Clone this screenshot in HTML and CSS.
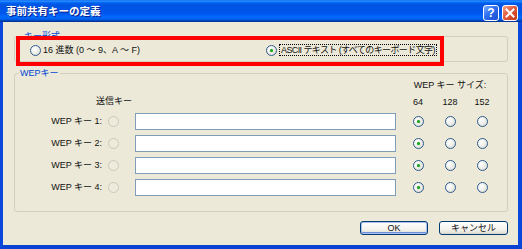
FILE: index.html
```html
<!DOCTYPE html>
<html lang="ja">
<head>
<meta charset="utf-8">
<title>事前共有キーの定義</title>
<link rel="stylesheet" href="styles.css">
</head>
<body>
<div class="window">
  <div class="titlebar">
    <span class="title">事前共有キーの定義</span>
    <div class="tb-buttons">
      <span class="tb-btn help">?</span>
      <span class="tb-btn close">
        <svg width="10" height="10" viewBox="0 0 10 10"><path d="M1.5 1.5 L8.5 8.5 M8.5 1.5 L1.5 8.5" stroke="#fff" stroke-width="2" stroke-linecap="square"/></svg>
      </span>
    </div>
  </div>
  <div class="frame">
    <fieldset class="group g1">
      <legend>キー形式</legend>
      <div class="format-row">
        <label class="opt"><span class="radio"></span><span class="opt-text">16 進数 (0 ～ 9、A ～ F)</span></label>
        <label class="opt"><span class="radio checked"></span><span class="opt-text focus">ASCII テキスト (すべてのキーボード文字)</span></label>
      </div>
    </fieldset>
    <fieldset class="group g2">
      <legend>WEPキー</legend>
      <div class="wep-grid">
        <div class="size-head">WEP キー サイズ:</div>
        <div class="send-head">送信キー</div>
        <div class="bits c64">64</div>
        <div class="bits c128">128</div>
        <div class="bits c152">152</div>

        <div class="key-label r1">WEP キー 1:</div>
        <span class="radio disabled c-send r1"></span>
        <span class="key-input r1"></span>
        <span class="radio checked c64 r1"></span>
        <span class="radio c128 r1"></span>
        <span class="radio c152 r1"></span>

        <div class="key-label r2">WEP キー 2:</div>
        <span class="radio disabled c-send r2"></span>
        <span class="key-input r2"></span>
        <span class="radio checked c64 r2"></span>
        <span class="radio c128 r2"></span>
        <span class="radio c152 r2"></span>

        <div class="key-label r3">WEP キー 3:</div>
        <span class="radio disabled c-send r3"></span>
        <span class="key-input r3"></span>
        <span class="radio checked c64 r3"></span>
        <span class="radio c128 r3"></span>
        <span class="radio c152 r3"></span>

        <div class="key-label r4">WEP キー 4:</div>
        <span class="radio disabled c-send r4"></span>
        <span class="key-input r4"></span>
        <span class="radio checked c64 r4"></span>
        <span class="radio c128 r4"></span>
        <span class="radio c152 r4"></span>
      </div>
    </fieldset>
    <div class="buttons">
      <span class="btn btn-ok">OK</span>
      <span class="btn btn-cancel">キャンセル</span>
    </div>
  </div>
  <div class="highlight"></div>
</div>
</body>
</html>
```

FILE: styles.css
```css
* { box-sizing: border-box; }
html, body { margin: 0; padding: 0; }
body {
  width: 522px;
  height: 249px;
  overflow: hidden;
  background: #ECE9D8;
  font-family: "Liberation Sans", "Noto Sans CJK JP", sans-serif;
  font-size: 9px;
  line-height: 11px;
  color: #111;
}
.window {
  position: relative;
  width: 522px;
  height: 249px;
  display: flex;
  flex-direction: column;
}
.titlebar {
  flex: none;
  height: 22px;
  display: flex;
  align-items: center;
  justify-content: space-between;
  padding: 0 4px 0 6px;
  background: linear-gradient(to bottom, #0058ee 0%, #3593ff 4%, #288eff 6%, #127dff 8%, #036ffc 10%, #0262ee 14%, #0057e5 20%, #0054e3 24%, #0055eb 56%, #005bf5 66%, #026afe 76%, #0062ef 86%, #0052d6 92%, #0040ab 94%, #003092 100%);
}
.title {
  color: #fff;
  font-family: "Noto Sans CJK JP", sans-serif;
  font-weight: bold;
  font-size: 10.5px;
  line-height: 12px;
  text-shadow: 1px 1px 0 #0A1F8C;
}
.tb-buttons {
  display: flex;
  gap: 3px;
  padding-top: 3px;
}
.tb-btn {
  width: 16px;
  height: 16px;
  border: 1px solid #fff;
  border-radius: 3px;
  display: flex;
  align-items: center;
  justify-content: center;
}
.help {
  background: linear-gradient(135deg, #7DB0FF 0%, #2D6DF0 45%, #1A4FD0 100%);
  color: #fff;
  font-family: "Liberation Sans", sans-serif;
  font-weight: bold;
  font-size: 12px;
  line-height: 14px;
}
.close {
  background: linear-gradient(135deg, #F3A58C 0%, #E2583A 45%, #C33A16 100%);
}
.frame {
  flex: 1;
  display: flex;
  flex-direction: column;
  border-left: 3px solid #0A48DC;
  border-right: 4px solid #0A48DC;
  border-bottom: 4px solid #0A42D2;
  padding: 9px 10px 0 11px;
}
.group {
  margin: 0;
  padding: 0;
  min-width: 0;
  border: 1px solid #D0D0BF;
  border-radius: 3px;
}
.group legend {
  margin-left: 4px;
  padding: 0 1px;
  color: #0046D5;
  font-size: 9px;
  line-height: 11px;
}
.g1 legend { margin-left: 8px; }
.format-row {
  display: grid;
  grid-template-columns: 236px auto;
  align-items: center;
  height: 16px;
  margin-bottom: 3px;
  padding-left: 15px;
}
.opt {
  display: flex;
  align-items: center;
  gap: 2px;
}
.opt-text { white-space: nowrap; }
.focus {
  border: 1px dotted #000;
  padding: 0 1px;
  line-height: 10px;
  letter-spacing: -0.6px;
}
.radio {
  display: block;
  width: 11px;
  height: 11px;
  border-radius: 50%;
  border: 1px solid #2F5B8E;
  background: radial-gradient(circle at 35% 35%, #FFFFFF 0%, #F2F2EE 40%, #D6D5CC 100%);
  position: relative;
}
.radio.checked::after {
  content: "";
  position: absolute;
  left: 3px;
  top: 3px;
  width: 3px;
  height: 3px;
  border-radius: 50%;
  background: #21A121;
  box-shadow: 0 0 1px #4CC44C;
}
.radio.disabled {
  border-color: #CAC8BB;
  background: #EEEBDD;
}
.g2 { margin-top: 6px; }
.wep-grid {
  display: grid;
  grid-template-columns: 88px 32px 261px 6px 32px 32px 32px;
  grid-template-rows: 11px 12px repeat(4, 17px);
  row-gap: 5px;
  padding: 1px 0 15px 0;
  align-items: center;
}
.size-head {
  grid-row: 1;
  grid-column: 5 / 8;
  text-align: center;
  white-space: nowrap;
}
.send-head {
  grid-row: 2;
  grid-column: 1 / 3;
  text-align: right;
  padding-right: 3px;
  align-self: start;
}
.bits { grid-row: 2; text-align: center; }
.r1 { grid-row: 3; }
.r2 { grid-row: 4; }
.r3 { grid-row: 5; }
.r4 { grid-row: 6; }
.c64 { grid-column: 5; justify-self: center; }
.c128 { grid-column: 6; justify-self: center; }
.c152 { grid-column: 7; justify-self: center; }
.key-label {
  grid-column: 1;
  text-align: right;
  white-space: nowrap;
  padding-right: 1px;
}
.c-send {
  grid-column: 2;
  justify-self: start;
  margin-left: 5px;
}
.key-input {
  grid-column: 3;
  height: 17px;
  background: #fff;
  border: 1px solid #7F9DB9;
}
.buttons {
  display: flex;
  justify-content: flex-end;
  gap: 11px;
  margin-top: 9px;
}
.btn {
  height: 14px;
  display: flex;
  align-items: center;
  justify-content: center;
  border: 1px solid #003C74;
  border-radius: 3px;
  background: linear-gradient(to bottom, #FFFFFF 0%, #F4F3EE 60%, #E3E1D8 90%, #D6D0C5 100%);
  font-size: 9px;
  line-height: 11px;
}
.btn-ok {
  width: 68px;
  box-shadow: inset 0 0 0 1px #A9C0EE, inset 0 -1px 0 1px #6D8FDC;
}
.btn-cancel { width: 69px; }
.highlight {
  position: absolute;
  left: 16px;
  top: 36px;
  width: 428px;
  height: 30px;
  border: 4px solid #F00;
}
```
